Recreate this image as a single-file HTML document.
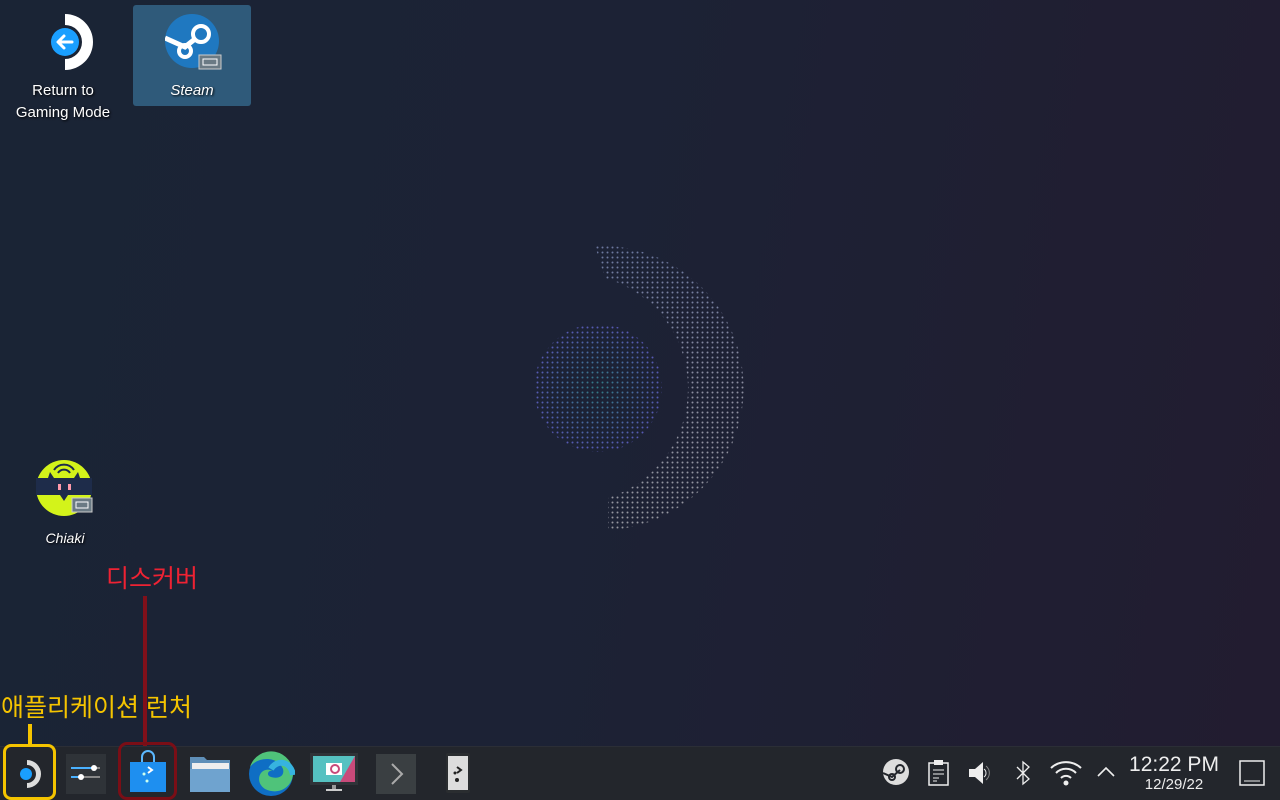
<!DOCTYPE html>
<html><head><meta charset="utf-8"><style>
*{margin:0;padding:0;box-sizing:border-box}
body{width:1280px;height:800px;overflow:hidden;position:relative;font-family:"Liberation Sans","Noto Sans CJK KR",sans-serif;background:linear-gradient(100deg,#1a2435 0%,#1c2235 45%,#221c30 100%)}
.lbl{position:absolute;color:#fff;font-size:15px;text-align:center;text-shadow:1px 1px 2px #000;line-height:22px}
.tb{position:absolute;left:0;top:746px;width:1280px;height:54px;background:#23262c;border-top:1px solid #2b2e36}
.ic{position:absolute}
</style></head><body>
<svg width="1280" height="746" style="position:absolute;left:0;top:0">
<defs>
<pattern id="d" width="5" height="5" patternUnits="userSpaceOnUse"><circle cx="2.5" cy="2.5" r="1" fill="#dfe6ff"/></pattern>
<radialGradient id="g1" cx="0.5" cy="0.5" r="0.5"><stop offset="0" stop-color="#3ab0b0"/><stop offset="1" stop-color="#7a7aff"/></radialGradient>
<linearGradient id="g2" x1="0" y1="0" x2="0" y2="1"><stop offset="0" stop-color="#9ad"/><stop offset="0.5" stop-color="#ccd"/><stop offset="1" stop-color="#ddd"/></linearGradient>
<mask id="m"><rect width="1280" height="746" fill="url(#d)"/></mask>
</defs>
<g mask="url(#m)" opacity="0.7">
<circle cx="598" cy="388" r="64" fill="url(#g1)"/>
<path d="M595 246 A142 142 0 0 1 608 530 L608 498 A115 115 0 0 0 605 278 Z" fill="url(#g2)"/>
</g>
</svg>

<svg class="ic" style="left:44px;top:14px" width="52" height="56" viewBox="0 0 52 56">
<path d="M21 0 A28 28 0 0 1 21 56 L21 45 A17 17 0 0 0 21 11Z" fill="#fff"/>
<circle cx="21" cy="28" r="14" fill="#1a9fff"/>
<path d="M28 28H15M20 22l-6 6 6 6" stroke="#fff" stroke-width="3" fill="none" stroke-linecap="round" stroke-linejoin="round"/>
</svg>
<div class="lbl" style="left:8px;top:80px;width:110px">Return to<br>Gaming Mode</div>

<div style="position:absolute;left:133px;top:5px;width:118px;height:101px;background:#2f5a7a;border-radius:3px"></div>
<svg class="ic" style="left:165px;top:14px" width="58" height="58" viewBox="0 0 58 58">
<circle cx="27" cy="27" r="27" fill="#1f78c0"/>
<circle cx="36" cy="20" r="8" fill="none" stroke="#fff" stroke-width="4"/>
<circle cx="20" cy="37" r="6" fill="none" stroke="#fff" stroke-width="4"/>
<path d="M0 24 L20 33 L30 25" fill="none" stroke="#fff" stroke-width="5"/>
<rect x="34" y="41" width="22" height="14" fill="#6a7a84" stroke="#ccc"/><rect x="38" y="45" width="14" height="6" fill="none" stroke="#fff"/>
</svg>
<div class="lbl" style="left:133px;top:80px;width:118px;font-style:italic">Steam</div>

<svg class="ic" style="left:36px;top:460px" width="60" height="60" viewBox="0 0 60 60">
<circle cx="28" cy="28" r="28" fill="#d3f31a"/>
<rect x="0" y="18" width="56" height="17" fill="#1e2c4a"/>
<path d="M12 18 L14 12 L18 18Z M38 18 L42 12 L44 18Z M24 35 L28 41 L32 35Z" fill="#1e2c4a"/>
<rect x="22" y="24" width="3" height="6" fill="#f9a"/><rect x="32" y="24" width="3" height="6" fill="#f9a"/>
<path d="M18 10 A12 12 0 0 1 38 10 M22 13 A7 7 0 0 1 34 13" stroke="#1e2c4a" stroke-width="2" fill="none"/>
<rect x="36" y="38" width="20" height="14" fill="#6a7a84" stroke="#ccc"/><rect x="40" y="42" width="12" height="6" fill="none" stroke="#fff"/>
</svg>
<div class="lbl" style="left:20px;top:527px;width:90px;font-style:italic;font-size:14px">Chiaki</div>

<div style="position:absolute;left:106px;top:559px;color:#ee2233;font-size:25px">디스커버</div>
<div style="position:absolute;left:143px;top:596px;width:4px;height:150px;background:#80101a"></div>
<div style="position:absolute;left:1px;top:688px;color:#f5c400;font-size:25px">애플리케이션 런처</div>
<div style="position:absolute;left:28px;top:724px;width:4px;height:22px;background:#f5c400"></div>

<div class="tb"></div>
<div style="position:absolute;left:3px;top:744px;width:53px;height:56px;border:3px solid #f5c400;border-radius:8px"></div>
<svg class="ic" style="left:17px;top:759px" width="26" height="30" viewBox="0 0 26 30"><path d="M10 1 A14 14 0 0 1 10 29 L10 24 A9 9 0 0 0 10 6Z" fill="#ddd"/><circle cx="9" cy="15" r="6" fill="#1a9fff"/></svg>
<div style="position:absolute;left:66px;top:754px;width:40px;height:40px;background:#2f3338"></div>
<svg class="ic" style="left:66px;top:754px" width="40" height="40"><path d="M5 14H34M5 23H34" stroke="#888" stroke-width="2"/><path d="M5 14H28M5 23H15" stroke="#4ab1ff" stroke-width="2"/><circle cx="28" cy="14" r="3" fill="#fff"/><circle cx="15" cy="23" r="3" fill="#fff"/></svg>
<div style="position:absolute;left:118px;top:742px;width:59px;height:58px;border:3px solid #7a0e16;border-radius:9px"></div>
<svg class="ic" style="left:128px;top:750px" width="40" height="44"><path d="M14 12 V7 A6 6 0 0 1 26 7 V12" stroke="#5bb8ff" stroke-width="2" fill="none"/><rect x="2" y="12" width="36" height="30" fill="#1e8ff0"/><path d="M20 17l4 3-4 3" stroke="#fff" stroke-width="2" fill="none"/><circle cx="16" cy="24" r="1.5" fill="#cfe"/><circle cx="19" cy="31" r="1.5" fill="#cfe"/></svg>
<svg class="ic" style="left:189px;top:755px" width="42" height="38"><path d="M1 2h14l3 3h23v32H1z" fill="#5f8fb8"/><rect x="3" y="8" width="37" height="6" fill="#eee"/><path d="M1 14h40v23H1z" fill="#6fa3cf"/></svg>
<svg class="ic" style="left:247px;top:751px" width="48" height="46" viewBox="0 0 48 46"><circle cx="24" cy="23" r="22" fill="#0f6ec4"/><path d="M46 24 A22 22 0 0 0 3 16 C10 6 30 4 36 18 C38 26 30 28 24 26 C18 24 22 18 26 20 C14 14 6 30 18 38 C30 44 44 38 46 24Z" fill="#4fc37a"/><path d="M46 24 C44 10 30 8 24 18" fill="none" stroke="#36b3e0" stroke-width="6"/></svg>
<svg class="ic" style="left:310px;top:753px" width="48" height="42"><rect x="0" y="0" width="48" height="32" fill="#2f3338"/><rect x="3" y="3" width="42" height="26" fill="#55c1c1"/><path d="M45 3V29H30z" fill="#c84a7a"/><rect x="16" y="10" width="16" height="12" fill="#fff"/><circle cx="25" cy="16" r="4" fill="none" stroke="#c84a7a" stroke-width="2"/><rect x="22" y="32" width="4" height="4" fill="#999"/><rect x="16" y="36" width="16" height="2" fill="#ccc"/></svg>
<div style="position:absolute;left:376px;top:754px;width:40px;height:40px;background:#3a3f42"></div>
<svg class="ic" style="left:376px;top:754px" width="40" height="40"><path d="M16 10l10 10-10 10" stroke="#aaa" stroke-width="2" fill="none"/></svg>
<svg class="ic" style="left:445px;top:753px" width="26" height="40"><rect x="1" y="0" width="24" height="40" rx="2" fill="#2a2d30"/><rect x="3" y="3" width="20" height="34" fill="#ddd"/><path d="M12 14l4 3-4 3" stroke="#222" stroke-width="2" fill="none"/><circle cx="10" cy="20" r="1.5" fill="#222"/><circle cx="12" cy="27" r="2" fill="#222"/></svg>

<svg class="ic" style="left:882px;top:758px" width="28" height="28"><circle cx="14" cy="14" r="13" fill="#ddd"/><circle cx="18" cy="11" r="4" fill="none" stroke="#23262c" stroke-width="2"/><circle cx="10" cy="19" r="3" fill="none" stroke="#23262c" stroke-width="2"/><path d="M1 15l9 4 8-7" stroke="#23262c" stroke-width="2" fill="none"/></svg>
<svg class="ic" style="left:928px;top:760px" width="22" height="26"><rect x="1" y="3" width="19" height="22" fill="none" stroke="#eee" stroke-width="1.5"/><rect x="6" y="0" width="9" height="5" fill="#eee"/><path d="M5 10h11M5 14h11M5 18h6M5 21h4" stroke="#eee"/></svg>
<svg class="ic" style="left:967px;top:760px" width="28" height="26"><path d="M2 9h6l8-7v22l-8-7H2z" fill="#eee"/><path d="M19 6a9 9 0 0 1 0 14" stroke="#888" fill="none"/><path d="M17 9a5 5 0 0 1 0 8" stroke="#eee" fill="none"/></svg>
<svg class="ic" style="left:1014px;top:760px" width="18" height="26"><path d="M3 7l12 12-6 5V2l6 5L3 19" stroke="#eee" stroke-width="1.3" fill="none"/></svg>
<svg class="ic" style="left:1049px;top:760px" width="34" height="26"><path d="M2 8a22 22 0 0 1 30 0M7 13a14 14 0 0 1 20 0M12 18a7 7 0 0 1 10 0" stroke="#eee" stroke-width="2" fill="none"/><circle cx="17" cy="23" r="2.5" fill="#eee"/></svg>
<svg class="ic" style="left:1096px;top:764px" width="20" height="14"><path d="M2 12l8-8 8 8" stroke="#eee" stroke-width="1.6" fill="none"/></svg>
<div style="position:absolute;left:1126px;top:753px;width:96px;text-align:center;color:#eee;font-size:21px;line-height:24px">12:22 PM</div>
<div style="position:absolute;left:1126px;top:776px;width:96px;text-align:center;color:#eee;font-size:15px;line-height:18px">12/29/22</div>
<svg class="ic" style="left:1239px;top:760px" width="26" height="26"><rect x="1" y="1" width="24" height="24" fill="none" stroke="#eee" stroke-width="1.5"/><path d="M5 21h16" stroke="#eee"/></svg>
</body></html>
